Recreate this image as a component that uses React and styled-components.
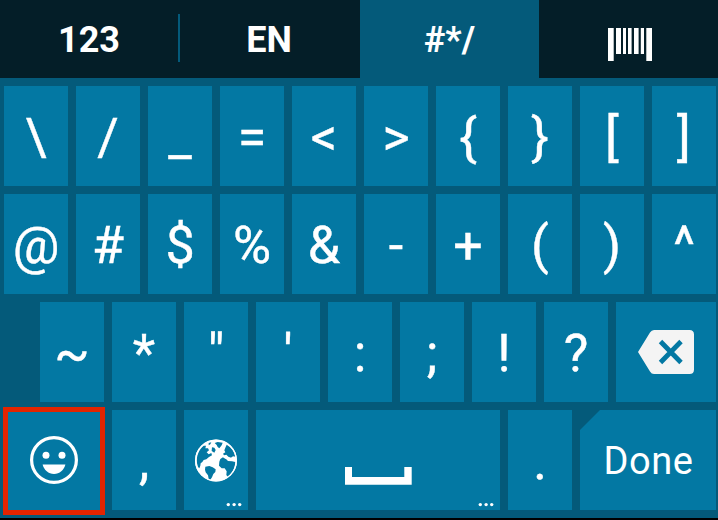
import React from "react";
import styled, { createGlobalStyle } from "styled-components";

const color = {
  panel: "#045a7a",
  key: "#0378a3",
  dark: "#041e28",
  alert: "#e32400",
};

const GlobalStyle = createGlobalStyle`
  * { box-sizing: border-box; }
  body { margin: 0; background: #000; overflow: hidden; }
`;

const Keyboard = styled.main`
  width: 718px;
  height: 518px;
  display: flex;
  flex-direction: column;
  background: ${color.panel};
  color: #fff;
  font-family: Roboto, sans-serif;
  overflow: hidden;
`;

const TabBar = styled.nav`
  display: grid;
  grid-template-columns: 180px 180px 179px 179px;
  grid-template-rows: 78px;
  height: 78px;
  flex: none;
`;

const Tab = styled.button`
  display: flex;
  align-items: center;
  justify-content: center;
  position: relative;
  border: 0;
  padding: ${(p) => (p.$icon ? "11px 0 0 2px" : p.$active ? "2px 0 0" : "2px 2px 0 0")};
  font: 700 36px/42px Roboto, sans-serif;
  color: #fff;
  background: ${(p) => (p.$active ? color.panel : color.dark)};
  ${(p) =>
    p.$divider &&
    `&::after {
      content: "";
      position: absolute;
      right: 0;
      top: 14px;
      width: 2px;
      height: 48px;
      background: ${color.panel};
    }`}
`;

const Rows = styled.div`
  display: flex;
  flex-direction: column;
  gap: 8px;
  padding: 8px 2px 0 4px;
`;

const Row = styled.div`
  display: flex;
  gap: 8px;
  height: 100px;
  padding-left: ${(p) => (p.$indent ? "36px" : "0")};
`;

const Key = styled.button`
  position: relative;
  display: flex;
  align-items: center;
  justify-content: center;
  flex: none;
  width: ${(p) => p.$width || 64}px;
  height: 100px;
  padding: 0;
  border: 0;
  color: #fff;
  background: ${color.key};
  font: 400 52px/100px Roboto, sans-serif;
`;

const Glyph = styled.span`
  display: block;
  height: 100px;
  line-height: 104px;
  -webkit-text-stroke: 0.4px #fff;
`;

const DoneKey = styled(Key)`
  clip-path: polygon(20px 0, 100% 0, 100% 100%, 0 100%, 0 20px);
  padding: 2px 0 0 1px;
  font-size: 38px;
  letter-spacing: 0.6px;
`;

const Highlight = styled.span`
  position: absolute;
  left: -1px;
  top: -3px;
  width: 102px;
  height: 108px;
  border: 5px solid ${color.alert};
`;

const MoreDots = styled.svg`
  position: absolute;
  right: 5px;
  bottom: 3px;
  width: 18px;
  height: 5px;
`;

const Icon = styled.svg`
  display: block;
  flex: none;
`;

const Barcode = () => (
  <Icon width="44" height="33" viewBox="0 0 44 33" fill="#fff">
    <path d="M0 0h5.7v33H0zM8 0h5v26H8zM15 0h3v26h-3zM20 0h3.6v26H20zM26 0h4.6v26H26zM32.8 0h3.2v26h-3.2zM38.3 0H44v33h-5.7z" />
  </Icon>
);

const Smile = () => (
  <Icon width="48" height="48" viewBox="0 0 48 48">
    <circle cx="24" cy="24" r="22.4" fill="none" stroke="#fff" strokeWidth="3.2" />
    <circle cx="16" cy="19.3" r="3.5" fill="#fff" />
    <circle cx="32" cy="19.3" r="3.5" fill="#fff" />
    <path d="M12.6 28.6h22.8C34 34.2 29.6 38 24 38s-10-3.8-11.4-9.4z" fill="#fff" />
  </Icon>
);

const Globe = () => (
  <Icon width="42" height="43" viewBox="45 114 126 129">
    <circle cx="108" cy="178.500" r="63" fill="#fff" />
    <g fill={color.key}>
      <path d="M51 187C48 164 57 146 71 134l7 0-2 8 8 0 3 6-7 6 6 6 8-4 2 7-9 5-8 7-8 2-4 6-5 4-1 7-3 8-4-4z" />
      <path d="M76 197l12-2 10 4 9 6-1 8-6 6-4 10-5 7-5-2-2-11-7-9-2-8z" />
      <path d="M104 126l9-3 15 2-3 8-7 9-5-4-3-6z" />
      <path d="M96 139l7 1 4 7-4 8-8-5z" />
      <path d="M140 131c14 8 23 20 26 36l-7-1-6 4-8-3-6-6-7 2-3-5 7-4-3-6 3-8z" />
      <path d="M121 174l8-5 9 5 6 6 12 1 10 2c-1 17-7 30-17 40l-6 4-4-5 1-11-6-9-9 0-8-8 1-12z" />
      <path d="M86 126l8-2-3 6-5 3z" />
    </g>
    <path d="M129 165l9 1 6 5 12-1 3 4-8 3-9-2-10-4z" fill="#fff" />
    <circle cx="108" cy="178.500" r="61" fill="none" stroke="#fff" strokeWidth="4" />
  </Icon>
);

const Backspace = () => (
  <Icon width="56" height="44" viewBox="0 0 56 44">
    <path d="M16 0h35.500Q56 0 56 4.500v35Q56 44 51.500 44H16q-2.500 0-4-2.500L0 22 12 2.500Q13.500 0 16 0z" fill="#f4f4f4" />
    <path d="M22.500 11.500l20.500 21M43 11.500L22.500 32.500" stroke={color.key} strokeWidth="4.800" />
  </Icon>
);

const SpaceKey = styled(Key)`
  padding: 32px 0 0 1px;
`;

const Space = () => (
  <Icon width="67" height="18" viewBox="0 0 67 18" fill="#fff">
    <path d="M0 0h7v10h52.300V0H66.700v17.700H0z" />
  </Icon>
);

const Dots = () => (
  <MoreDots viewBox="0 0 18 5" fill="#fff">
    <circle cx="3.300" cy="2.600" r="1.700" />
    <circle cx="9.100" cy="2.600" r="1.700" />
    <circle cx="14.700" cy="2.600" r="1.700" />
  </MoreDots>
);

const CharKey = ({ char }) => (
  <Key>
    <Glyph>{char}</Glyph>
  </Key>
);

const brackets = ["\\", "/", "_", "=", "<", ">", "{", "}", "[", "]"];
const symbols = ["@", "#", "$", "%", "&", "-", "+", "(", ")", "^"];
const punctuation = ["~", "*", '"', "'", ":", ";", "!", "?"];

export default function App() {
  return (
    <>
      <GlobalStyle />
      <Keyboard>
        <TabBar>
          <Tab $divider>123</Tab>
          <Tab>EN</Tab>
          <Tab $active>#*/</Tab>
          <Tab $icon aria-label="Barcode">
            <Barcode />
          </Tab>
        </TabBar>
        <Rows>
          <Row>{brackets.map((c) => <CharKey key={c} char={c} />)}</Row>
          <Row>{symbols.map((c) => <CharKey key={c} char={c} />)}</Row>
          <Row $indent>
            {punctuation.map((c) => <CharKey key={c} char={c} />)}
            <Key $width={100} aria-label="Backspace">
              <Backspace />
            </Key>
          </Row>
          <Row>
            <Key $width={100} aria-label="Emoji">
              <Smile />
              <Highlight />
            </Key>
            <CharKey char="," />
            <Key aria-label="Language">
              <Globe />
              <Dots />
            </Key>
            <SpaceKey $width={244} aria-label="Space">
              <Space />
              <Dots />
            </SpaceKey>
            <CharKey char="." />
            <DoneKey $width={136}>Done</DoneKey>
          </Row>
        </Rows>
      </Keyboard>
    </>
  );
}
